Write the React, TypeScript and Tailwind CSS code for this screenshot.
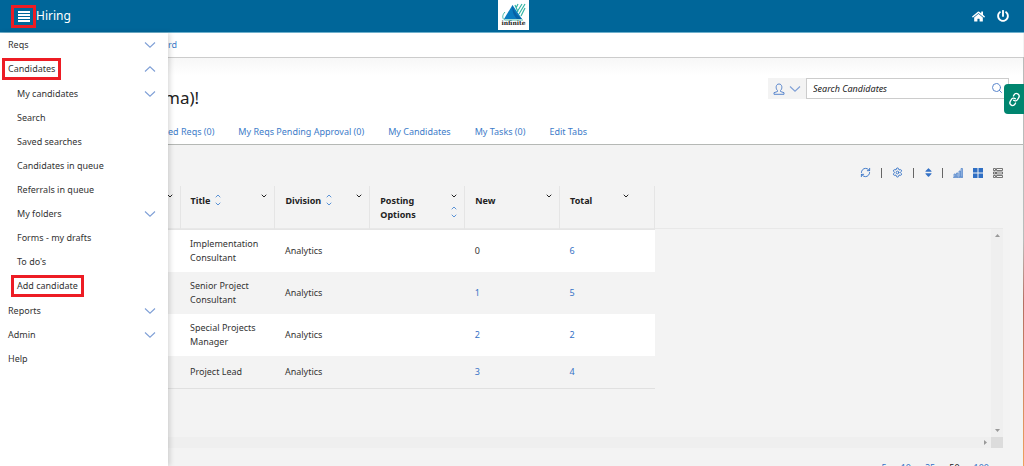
import { useState } from "react";
import { FaHome, FaPowerOff, FaSort } from "react-icons/fa";
import { ChevronDown, ChevronUp, Link, RefreshCw, Search, Settings } from "lucide-react";

type MenuItem = {
  label: string;
  arrow?: "up" | "down";
  marked?: boolean;
};

const topItems: MenuItem[] = [
  { label: "Reqs", arrow: "down" },
  { label: "Candidates", arrow: "up", marked: true },
];

const candidateItems: MenuItem[] = [
  { label: "My candidates", arrow: "down" },
  { label: "Search" },
  { label: "Saved searches" },
  { label: "Candidates in queue" },
  { label: "Referrals in queue" },
  { label: "My folders", arrow: "down" },
  { label: "Forms - my drafts" },
  { label: "To do's" },
  { label: "Add candidate", marked: true },
];

const bottomItems: MenuItem[] = [
  { label: "Reports", arrow: "down" },
  { label: "Admin", arrow: "down" },
  { label: "Help" },
];

const tabs = [
  "ed Reqs (0)",
  "My Reqs Pending Approval (0)",
  "My Candidates",
  "My Tasks (0)",
  "Edit Tabs",
];

const rows = [
  { title: "Implementation Consultant", division: "Analytics", fresh: 0, total: 6 },
  { title: "Senior Project Consultant", division: "Analytics", fresh: 1, total: 5 },
  { title: "Special Projects Manager", division: "Analytics", fresh: 2, total: 2 },
  { title: "Project Lead", division: "Analytics", fresh: 3, total: 4 },
];

const pageSizes = [5, 10, 25, 50, 100];

function MenuRow({ item }: { item: MenuItem }) {
  return (
    <li>
      <button type="button" className="flex h-6 w-full items-center justify-between pr-3 text-left">
        <span className="relative">
          {item.label}
          {item.marked && (
            <span className="absolute -inset-x-1.5 -inset-y-1 border-3 border-[#ed1c24]" />
          )}
        </span>
        {item.arrow === "down" && <Arrow />}
        {item.arrow === "up" && <Arrow up />}
      </button>
    </li>
  );
}

function Arrow({ up }: { up?: boolean }) {
  return (
    <svg width="12" height="6" viewBox="0 0 12 6" fill="none" stroke="#7f9fd6" strokeWidth="1.1">
      <path d={up ? "M1 5.5 6 .8l5 4.7" : "M1 .5l5 4.7L11 .5"} />
    </svg>
  );
}

function SortArrows() {
  return (
    <span className="flex flex-col text-[#5b93d6]">
      <ChevronUp size={8} strokeWidth={3} />
      <ChevronDown size={8} strokeWidth={3} />
    </span>
  );
}

function Logo() {
  return (
    <svg width="31" height="30" viewBox="0 0 31 30" role="img" aria-label="infinite">
      <rect width="31" height="30" fill="#fff" />
      <path d="M14.500 5 6 19h18z" fill="#0a7cc0" />
      <path d="M14.500 5c1 6 4 10 9.500 14h-5C15 15 14 10 14.500 5z" fill="#0862a4" />
      <path d="M17 5l3 7M20 4l-2 4M24 4l-5 8M27 4l-6 10M27 8l-4 8" stroke="#35b5a4" strokeWidth="1.200" />
      <path d="M7 12c-3 3-3 7 0 8h18" stroke="#43b9ac" strokeWidth="1" fill="none" />
      <text x="15.500" y="25" textAnchor="middle" fontSize="6" fontFamily="DejaVu Serif, serif" fontWeight="bold" fill="#222">
        infinite
      </text>
    </svg>
  );
}

export default function App() {
  const [query, setQuery] = useState("");

  return (
    <div className="flex h-screen flex-col overflow-hidden bg-[#f3f3f3] font-['Noto_Sans',sans-serif] text-[9px] leading-[14px] text-[#333]">

      {/* HEADER */}
      <header className="grid h-[33px] shrink-0 grid-cols-3 items-center border-b border-[#6fb0cc] bg-[#006699] text-white">
        <div className="flex items-center pl-[11px]">
          <button type="button" aria-label="Menu" className="flex h-[23px] w-[25px] items-center justify-center border-3 border-[#ed1c24]">
            <svg width="12" height="11" viewBox="0 0 12 11" fill="#fff">
              <path d="M0 0h12v2H0zM0 3h12v2H0zM0 6h12v2H0zM0 9h12v2H0z" />
            </svg>
          </button>
          <span className="text-xs">Hiring</span>
        </div>
        <div className="flex justify-center self-start pl-1">
          <Logo />
        </div>
        <div className="flex justify-end gap-3 pr-[15px]">
          <a href="#home" aria-label="Home"><FaHome size={13} /></a>
          <a href="#logout" aria-label="Sign out"><FaPowerOff size={12} /></a>
        </div>
      </header>

      <div className="flex min-h-0 flex-1">

        {/* MENU */}
        <aside className="z-10 w-[168px] shrink-0 bg-white shadow-[2px_0_5px_rgba(0,0,0,0.15)]">
          <nav>
            <ul className="pl-2">
              {topItems.map((item) => <MenuRow key={item.label} item={item} />)}
              <li>
                <ul className="py-px pl-[9px]">
                  {candidateItems.map((item) => <MenuRow key={item.label} item={item} />)}
                </ul>
              </li>
              {bottomItems.map((item) => <MenuRow key={item.label} item={item} />)}
            </ul>
          </nav>
        </aside>

        {/* CONTENT */}
        <main className="min-w-0 flex-1">
          <div className="flex h-[25px] items-center border-b border-[#ccc] bg-white text-[#3d7cc9]">
            <a href="#dashboard">rd</a>
          </div>

          <div className="border-b border-[#b5b8b5] bg-linear-to-b from-[#f7f7f7] to-white to-20%">
            <div className="flex items-start justify-between pt-5 pr-[14px]">
              <h1 className="-ml-1 pt-2 text-[17px] leading-6 text-[#222]">ma)!</h1>
              <form className="relative flex">
                <button type="button" aria-label="Search type" className="flex h-[21px] w-[38px] items-center justify-center gap-1 bg-[#f3f3f3]">
                  <svg width="12" height="12" viewBox="0 0 12 12" fill="none" stroke="#5b87cd">
                    <path d="M4.500 7.500C2.500 6 2.500 1 6 1s3.500 5 1.500 6.500v1l3.500 1.200v1.600H1V9.700l3.500-1.200z" />
                  </svg>
                  <Arrow />
                </button>
                <input
                  aria-label="Search Candidates"
                  placeholder="Search Candidates"
                  value={query}
                  onChange={(e) => setQuery(e.target.value)}
                  className="h-[21px] w-[203px] border border-[#ccc] bg-white px-1.5 italic placeholder:text-[#222]"
                />
                <button type="submit" aria-label="Search" className="absolute top-1 right-1.5 text-[#5b87cd]">
                  <Search size={12} strokeWidth={2} />
                </button>
                <a href="#links" aria-label="Links" className="absolute top-[6px] -right-4 flex h-[30px] w-[21px] items-center justify-center rounded-l bg-[#00856f] text-white">
                  <Link size={13} strokeWidth={2.5} className="-rotate-15" />
                </a>
              </form>
            </div>
            <nav className="flex gap-6 pt-[14px] pb-1 leading-4 text-[#3d7cc9]">
              {tabs.map((tab) => (
                <a key={tab} href="#tab" className="whitespace-nowrap">{tab}</a>
              ))}
            </nav>
          </div>

          {/* TOOLBAR */}
          <div className="flex h-[41px] items-end justify-end gap-[10px] pr-5 pb-2 text-[#3572c6]">
            <button type="button" aria-label="Refresh"><RefreshCw size={11} /></button>
            <span className="h-[10px] w-px bg-[#666]" />
            <button type="button" aria-label="Settings"><Settings size={11} /></button>
            <span className="h-[10px] w-px bg-[#666]" />
            <button type="button" aria-label="Sort" className="flex w-2 justify-center">
              <FaSort size={11} className="shrink-0" />
            </button>
            <span className="h-[10px] w-px bg-[#666]" />
            <button type="button" aria-label="Chart">
              <svg width="10" height="10" viewBox="0 0 10 10" fill="#a9c4e8" stroke="#4f82c8" strokeWidth=".7">
                <path d="M0 9.500h10M1 6h1.500v3H1zM3.500 5H5v4H3.500zM6 3h1.500v6H6zM8 .5h1.500V9H8z" />
              </svg>
            </button>
            <button type="button" aria-label="Tiles">
              <svg width="10" height="10" viewBox="0 0 10 10" fill="#2f6fc4">
                <path d="M0 0h4.500v4.500H0zM5.500 0H10v4.500H5.500zM0 5.500h4.500V10H0zM5.500 5.500H10V10H5.500z" />
              </svg>
            </button>
            <button type="button" aria-label="List">
              <svg width="10" height="10" viewBox="0 0 10 10" fill="none" stroke="#555" strokeWidth=".8">
                <path d="M.5.5h2v2h-2zM3.500.5h6v2h-6zM.5 4h2v2h-2zM3.500 4h6v2h-6zM.5 7.500h2v2h-2zM3.500 7.500h6v2h-6z" />
              </svg>
            </button>
          </div>

          {/* TABLE */}
          <div className="relative mr-5 h-[262px]">
            <div className="absolute inset-x-0 top-[42px] bottom-0 border-t border-[#e8e8e8]" />
            <table className="relative w-[487px] table-fixed border-b border-[#e0e0e0]">
              <thead>
                <tr className="h-[43px] border-b border-[#e5e5e5] text-left align-top text-[#222]">
                  <th className="w-3 border-r border-[#e5e5e5] pt-[6px]">
                    <ChevronDown size={8} strokeWidth={3} className="-ml-0.5" />
                  </th>
                  <th className="border-r border-[#e5e5e5] pt-[6px] pr-[6px] pl-[10px]">
                    <div className="flex items-start gap-1">
                      <span className="pt-[2px]">Title</span>
                      <SortArrows />
                      <ChevronDown size={8} strokeWidth={3} className="ml-auto" />
                    </div>
                  </th>
                  <th className="border-r border-[#e5e5e5] pt-[6px] pr-[6px] pl-[10px]">
                    <div className="flex items-start gap-1">
                      <span className="pt-[2px]">Division</span>
                      <SortArrows />
                      <ChevronDown size={8} strokeWidth={3} className="ml-auto" />
                    </div>
                  </th>
                  <th className="border-r border-[#e5e5e5] pt-[6px] pr-[6px] pl-[10px]">
                    <div className="flex items-start justify-between">
                      <span className="pt-[2px]">Posting<br />Options</span>
                      <span className="flex flex-col gap-1">
                        <ChevronDown size={8} strokeWidth={3} />
                        <SortArrows />
                      </span>
                    </div>
                  </th>
                  <th className="border-r border-[#e5e5e5] pt-[6px] pr-[6px] pl-[10px]">
                    <div className="flex items-start justify-between">
                      <span className="pt-[2px]">New</span>
                      <ChevronDown size={8} strokeWidth={3} />
                    </div>
                  </th>
                  <th className="border-r border-[#e5e5e5] pt-[6px] pr-6 pl-[10px]">
                    <div className="flex items-start justify-between">
                      <span className="pt-[2px]">Total</span>
                      <ChevronDown size={8} strokeWidth={3} />
                    </div>
                  </th>
                </tr>
              </thead>
              <tbody>
                {rows.map((row) => (
                  <tr key={row.title} className="odd:bg-white even:bg-[#f3f3f3]">
                    <td />
                    <td className="py-[7px] pr-2 pl-[10px]">{row.title}</td>
                    <td className="px-[10px]">{row.division}</td>
                    <td />
                    <td className="px-[10px] py-[9px]">
                      {row.fresh > 0 ? <a href="#new" className="text-[#3572c6]">{row.fresh}</a> : row.fresh}
                    </td>
                    <td className="px-[10px]">
                      <a href="#total" className="text-[#3572c6]">{row.total}</a>
                    </td>
                  </tr>
                ))}
              </tbody>
            </table>

            {/* SCROLLBARS */}
            <div className="absolute top-[43px] right-0 bottom-[11px] flex w-3 flex-col items-center justify-between bg-[#efefef] py-[5px]">
              <svg width="5" height="3" fill="#999"><path d="M0 3 2.500 0 5 3z" /></svg>
              <svg width="5" height="3" fill="#999"><path d="M0 0h5L2.500 3z" /></svg>
            </div>
            <div className="absolute inset-x-0 bottom-0 flex h-[11px] items-center justify-end bg-[#efefef] pr-4">
              <svg width="3" height="5" fill="#999"><path d="M0 0v5l3-2.500z" /></svg>
              <span className="absolute right-0 h-[11px] w-3 bg-[#dcdcdc]" />
            </div>
          </div>

          {/* PAGE SIZE */}
          <div className="flex justify-end gap-[14px] pt-[13px] pr-[34px] text-[#3572c6]">
            {pageSizes.map((size) => (
              <a key={size} href="#size" className={size === 50 ? "text-[#222]" : ""}>{size}</a>
            ))}
          </div>
        </main>

        <div className="mt-6 w-px shrink-0 bg-linear-to-b from-[#b9bcbb] from-45% via-[#b56f62] via-60% to-[#efa05c]" />
      </div>
    </div>
  );
}
